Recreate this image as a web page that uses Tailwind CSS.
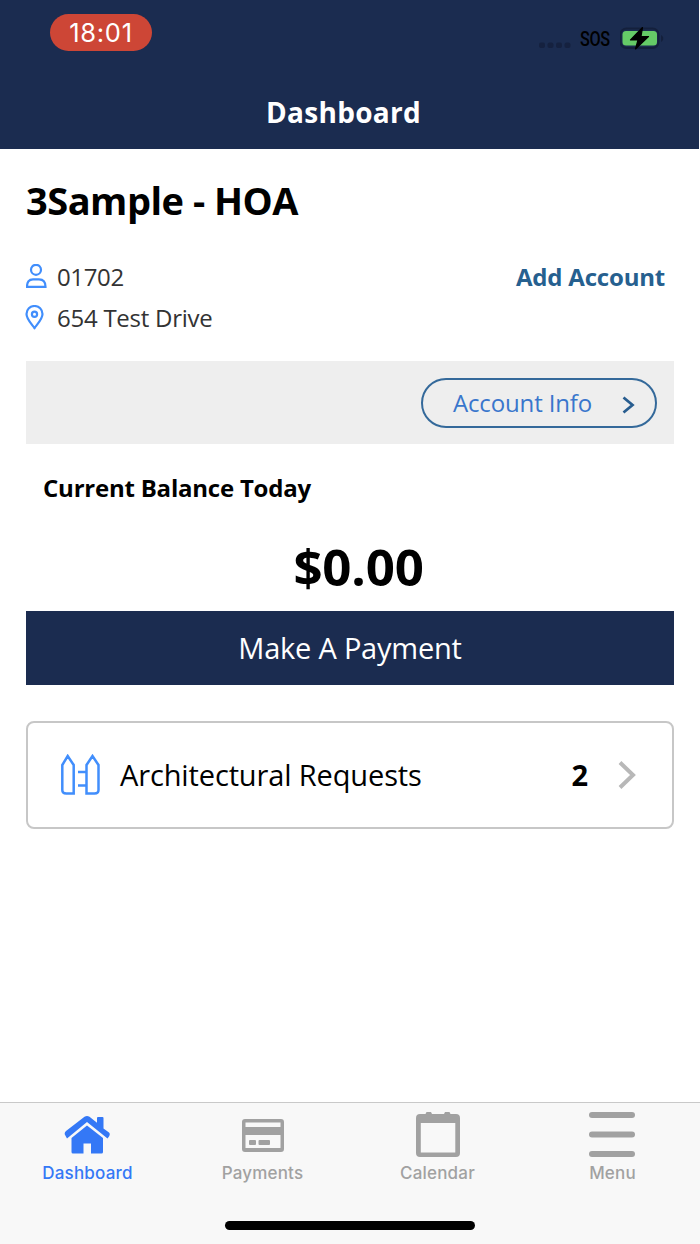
<!DOCTYPE html>
<html lang="en">
<head>
<meta charset="utf-8">
<title>Dashboard</title>
<script src="https://cdn.jsdelivr.net/npm/@tailwindcss/browser@4"></script>
</head>
<body class="bg-white">
<div class="w-[700px] h-[1244px] flex flex-col overflow-hidden font-['Open_Sans',sans-serif] whitespace-nowrap text-black">
  <header class="h-[149px] w-[699px] bg-[#1b2c50] flex flex-col shrink-0">
    <div class="h-[76px] flex justify-between pl-[50px] pr-[33px]">
      <div class="mt-[14px] h-[37px] w-[102px] rounded-full bg-[#cd4636] text-white flex items-center justify-center font-['Inter',sans-serif] text-[25.500px] tracking-[0.700px] leading-[37px]"><span>18:01</span></div>
      <div class="mt-[24px] h-[30px] flex items-center">
        <svg width="34" height="30" viewBox="0 0 34 30" fill="#15213f"><rect x="0" y="18.500" width="6" height="5.500" rx="2"/><rect x="8.500" y="18.500" width="6" height="5.500" rx="2"/><rect x="17" y="18.500" width="6" height="5.500" rx="2"/><rect x="25.500" y="18.500" width="6" height="5.500" rx="2"/></svg>
        <span class="ml-[7px] w-[40px] font-['Roboto',sans-serif] font-medium text-[21px] leading-[30px] tracking-[-0.500px] inline-block origin-left scale-x-[0.77]">SOS</span>
        <svg width="46" height="30" viewBox="0 0 46 30"><rect x="0.500" y="4.500" width="38" height="19.500" rx="6" fill="none" stroke="#14203c" stroke-width="2"/><rect x="2.500" y="7" width="34.500" height="14.500" rx="3.500" fill="#65cb67"/><path d="M41 11v7c3-1.500 3-5.500 0-7z" fill="#14203c"/><path d="M22.500 3.500L10.500 16h7.500l-2.500 9L28.500 12.500h-7.500z" fill="#000" stroke="#000" stroke-width="1.200" stroke-linejoin="round"/></svg>
      </div>
    </div>
    <h1 class="h-[71px] flex items-center justify-center pr-[12px] text-white font-bold text-[28px] tracking-[0.300px]">Dashboard</h1>
  </header>

  <main class="flex-1 px-[26px] flex flex-col">
    <h2 class="mt-[21px] h-[60px] leading-[60px] font-bold text-[38px] tracking-[-0.500px]">3Sample - HOA</h2>
    <div class="mt-[26px] h-[41px] flex items-center">
      <svg width="21" height="25" viewBox="0 0 21 25" fill="none" stroke="#418efc" stroke-width="2.200"><circle cx="10" cy="5.800" r="5"/><path d="M1 22.800c0-5 2-7.500 6-7.500h6c4 0 6.500 2.500 6.500 7.500z"/></svg>
      <span class="ml-[10px] text-[24px] tracking-[-0.350px] text-[#333]">01702</span>
      <a class="ml-auto mr-[9px] font-bold text-[24px] tracking-[-0.200px] text-[#26608f]">Add Account</a>
    </div>
    <div class="h-[41px] flex items-center">
      <svg class="-ml-px" width="19" height="25" viewBox="0 0 19 25" fill="none" stroke="#418efc" stroke-width="2.200"><path d="M9.500 23.300C8 20.500 1.500 14.500 1.500 9a7.900 7.900 0 0 1 16 0c0 5.500-6.500 11.500-8 14.300z" stroke-linejoin="round"/><circle cx="9.500" cy="9.300" r="2.600"/></svg>
      <span class="ml-[13px] text-[24px] tracking-[-0.250px] text-[#333]">654 Test Drive</span>
    </div>
    <div class="mt-[23px] h-[83px] w-[648px] bg-[#eee] flex items-center justify-end pr-[17px]">
      <button class="w-[236px] h-[50px] rounded-full border-2 border-[#34699a] flex items-center pl-[30px] text-[24px] tracking-[-0.150px] text-[#3976cc]">
        <span>Account Info</span>
        <svg class="ml-auto mr-[20px] mt-[4px]" width="13" height="18" viewBox="0 0 13 18" fill="none" stroke="#285d8f" stroke-width="2.800"><path d="M1.500 1.500L10.500 9l-9 7.500"/></svg>
      </button>
    </div>
    <h3 class="mt-[24px] h-[40px] leading-[40px] pl-[17px] font-bold text-[24px] tracking-[-0.220px]">Current Balance Today</h3>
    <div class="mt-[23px] h-[70px] leading-[70px] pl-[17px] text-center font-bold text-[51px] tracking-[-0.200px]">$0.00</div>
    <button class="mt-[10px] h-[74px] w-[648px] bg-[#1b2c50] text-white text-[29px] tracking-[-0.220px] flex items-center justify-center">Make A Payment</button>
    <div class="mt-[36px] h-[108px] w-[648px] rounded-[8px] border-2 border-[#c7c7c7] flex items-center pl-[33px] pr-[36px] text-[29px]">
      <svg width="40" height="42" viewBox="0 0 40 42" fill="none" stroke="#418efc" stroke-width="2.500"><path d="M1.300 11L6.700 2l6 9v28.500h-7.500q-3.900 0-3.900-3.500zM25.500 11l6-9 6 9v25q0 3.500-4 3.500h-8zM17 18h8.500M17 31.500h8.500"/></svg>
      <span class="ml-[19px] tracking-[-0.130px]">Architectural Requests</span>
      <b class="ml-auto">2</b>
      <svg class="ml-[30px]" width="18" height="28" viewBox="0 0 18 28" fill="none" stroke="#b8b8b8" stroke-width="4"><path d="M2 1.500L15 14 2 26.500"/></svg>
    </div>
  </main>

  <nav class="h-[142px] shrink-0 border-t border-[#c9c9c9] bg-[#f8f8f8] flex flex-col items-center font-['Inter',sans-serif] font-medium text-[17px] text-[#a1a1a1]">
    <div class="w-full grid grid-cols-4">
      <a class="flex flex-col items-center text-[#3478f6]">
        <svg class="mt-[9px] mr-px" width="46" height="48" viewBox="0 0 46 48" fill="currentColor"><path d="M7.500 26L23 13.500 39 26v14q0 1.500-1.500 1.500H27V31.500h-7.500v10H9Q7.500 41.500 7.500 40z"/><path d="M.8 22.500Q.3 20.500 2 19L20.500 4.800q2.500-1.800 5 0L33 10.800V6q0-1 1-1h4.500q1 0 1 1v10.500l5.500 4q1.500 1.500 0 4l-1.500 2L23 10 3 26.500z"/></svg>
        <span class="h-[22px] leading-[22px] mt-[2px] tracking-[0.220px]">Dashboard</span>
      </a>
      <a class="flex flex-col items-center">
        <svg class="mt-[9px]" width="44" height="48" viewBox="0 0 44 48" fill="currentColor"><path fill-rule="evenodd" d="M4 7h36q3 0 3 3v27q0 3-3 3H4q-3 0-3-3V10q0-3 3-3zm.5 3.500v4.500h35v-4.500zm0 12.500v13h35V23z"/><rect x="8" y="28" width="7" height="5" rx="1"/><rect x="17.500" y="28" width="11.500" height="5" rx="1"/></svg>
        <span class="h-[22px] leading-[22px] mt-[2px] tracking-[0.180px]">Payments</span>
      </a>
      <a class="flex flex-col items-center">
        <svg class="mt-[9px]" width="44" height="48" viewBox="0 0 44 48" fill="currentColor"><path fill-rule="evenodd" d="M4 2h5.500l1-2h4.500l1 2h12l1-2h4.500l1 2H40q4 0 4 4v35q0 4-4 4H4q-4 0-4-4V6q0-4 4-4zm.8 9v29.500h34.500V11z"/></svg>
        <span class="h-[22px] leading-[22px] mt-[2px] tracking-[0.180px]">Calendar</span>
      </a>
      <a class="flex flex-col items-center">
        <svg class="mt-[9px] mr-px" width="46" height="48" viewBox="0 0 46 48" fill="currentColor"><rect y="0" width="46" height="6" rx="3"/><rect y="19.500" width="46" height="6" rx="3"/><rect y="39" width="46" height="6" rx="3"/></svg>
        <span class="h-[22px] leading-[22px] mt-[2px] tracking-[0.180px]">Menu</span>
      </a>
    </div>
    <div class="mt-[37px] h-[9px] w-[250px] rounded-full bg-black"></div>
  </nav>
</div>
</body>
</html>
